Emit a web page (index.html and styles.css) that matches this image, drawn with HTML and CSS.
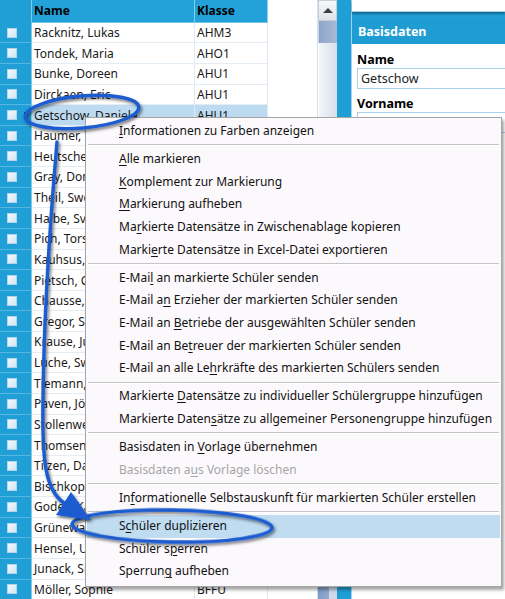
FILE: index.html
```html
<!DOCTYPE html>
<html lang="de">
<head>
<meta charset="utf-8">
<title>Schüler</title>
<link rel="stylesheet" href="styles.css">
</head>
<body>
<div class="app">
  <div class="gridwrap">
    <div class="grid">
      <div class="row head">
        <div class="rh"></div>
        <div class="hc">Name</div>
        <div class="hc">Klasse</div>
      </div>
      <div class="row"><div class="rh"><span class="cb"></span></div><div class="c name">Racknitz, Lukas</div><div class="c">AHM3</div></div>
      <div class="row"><div class="rh"><span class="cb"></span></div><div class="c name">Tondek, Maria</div><div class="c">AHO1</div></div>
      <div class="row"><div class="rh"><span class="cb"></span></div><div class="c name">Bunke, Doreen</div><div class="c">AHU1</div></div>
      <div class="row"><div class="rh"><span class="cb"></span></div><div class="c name">Dirckaen, Eric</div><div class="c">AHU1</div></div>
      <div class="row sel"><div class="rh"><span class="cb"></span><span class="cur"></span></div><div class="c name">Getschow, Daniela</div><div class="c">AHU1</div></div>
      <div class="row"><div class="rh"><span class="cb"></span></div><div class="c name">Haumer, Tina</div><div class="c"></div></div>
      <div class="row"><div class="rh"><span class="cb"></span></div><div class="c name">Heutschel, Anja</div><div class="c"></div></div>
      <div class="row"><div class="rh"><span class="cb"></span></div><div class="c name">Gray, Dominik</div><div class="c"></div></div>
      <div class="row"><div class="rh"><span class="cb"></span></div><div class="c name">Theil, Sweta</div><div class="c"></div></div>
      <div class="row"><div class="rh"><span class="cb"></span></div><div class="c name">Halbe, Sven</div><div class="c"></div></div>
      <div class="row"><div class="rh"><span class="cb"></span></div><div class="c name">Pich, Torsten</div><div class="c"></div></div>
      <div class="row"><div class="rh"><span class="cb"></span></div><div class="c name">Kauhsus, Nico</div><div class="c"></div></div>
      <div class="row"><div class="rh"><span class="cb"></span></div><div class="c name">Pietsch, Christin</div><div class="c"></div></div>
      <div class="row"><div class="rh"><span class="cb"></span></div><div class="c name">Chausse, Lena</div><div class="c"></div></div>
      <div class="row"><div class="rh"><span class="cb"></span></div><div class="c name">Gregor, Sarah</div><div class="c"></div></div>
      <div class="row"><div class="rh"><span class="cb"></span></div><div class="c name">Krause, Julia</div><div class="c"></div></div>
      <div class="row"><div class="rh"><span class="cb"></span></div><div class="c name">Lüche, Swen</div><div class="c"></div></div>
      <div class="row"><div class="rh"><span class="cb"></span></div><div class="c name">Tiemann, Jan</div><div class="c"></div></div>
      <div class="row"><div class="rh"><span class="cb"></span></div><div class="c name">Paven, Jörg</div><div class="c"></div></div>
      <div class="row"><div class="rh"><span class="cb"></span></div><div class="c name">Stollenwerk, Tim</div><div class="c"></div></div>
      <div class="row"><div class="rh"><span class="cb"></span></div><div class="c name">Thomsen, Ole</div><div class="c"></div></div>
      <div class="row"><div class="rh"><span class="cb"></span></div><div class="c name">Tilzen, Daniel</div><div class="c"></div></div>
      <div class="row"><div class="rh"><span class="cb"></span></div><div class="c name">Bischkopf, Eva</div><div class="c"></div></div>
      <div class="row"><div class="rh"><span class="cb"></span></div><div class="c name">Godes, Kai</div><div class="c"></div></div>
      <div class="row"><div class="rh"><span class="cb"></span></div><div class="c name">Grünewald, Lisa</div><div class="c"></div></div>
      <div class="row"><div class="rh"><span class="cb"></span></div><div class="c name">Hensel, Ute</div><div class="c"></div></div>
      <div class="row"><div class="rh"><span class="cb"></span></div><div class="c name">Junack, Silke</div><div class="c"></div></div>
      <div class="row"><div class="rh"><span class="cb"></span></div><div class="c name">Möller, Sophie</div><div class="c">BFFU</div></div>
    </div>
  </div>
  <div class="scrollbar">
    <div class="sb-btn"><span class="up"></span></div>
    <div class="sb-thumb"></div>
    <div class="sb-track"></div>
    <div class="sb-low"></div>
  </div>
  <div class="gutter"></div>
  <div class="panel">
    <div class="topbox"></div>
    <div class="pbox">
      <div class="phead">Basisdaten</div>
      <div class="pbody">
        <div class="lbl">Name</div>
        <div class="inp">Getschow</div>
        <div class="lbl">Vorname</div>
        <div class="inp"></div>
      </div>
    </div>
  </div>
</div>

<div class="menu">
  <div class="mi"><u>I</u>nformationen zu Farben anzeigen</div>
  <div class="sep"></div>
  <div class="mi"><u>A</u>lle markieren</div>
  <div class="mi"><u>K</u>omplement zur Markierung</div>
  <div class="mi"><u>M</u>arkierung aufheben</div>
  <div class="mi">Ma<u>r</u>kierte Datensätze in Zwischenablage kopieren</div>
  <div class="mi">Marki<u>e</u>rte Datensätze in Excel-Datei exportieren</div>
  <div class="sep"></div>
  <div class="mi">E-Mai<u>l</u> an markierte Schüler senden</div>
  <div class="mi">E-Mail a<u>n</u> Erzieher der markierten Schüler senden</div>
  <div class="mi">E-Mail an <u>B</u>etriebe der ausgewählten Schüler senden</div>
  <div class="mi">E-Mail an Be<u>t</u>reuer der markierten Schüler senden</div>
  <div class="mi">E-Mail an alle Le<u>h</u>rkräfte des markierten Schülers senden</div>
  <div class="sep"></div>
  <div class="mi">Markierte <u>D</u>atensätze zu individueller Schülergruppe hinzufügen</div>
  <div class="mi">Markierte Daten<u>s</u>ätze zu allgemeiner Personengruppe hinzufügen</div>
  <div class="sep"></div>
  <div class="mi">Basisdaten in <u>V</u>orlage übernehmen</div>
  <div class="mi dis">Basisdaten a<u>u</u>s Vorlage löschen</div>
  <div class="sep"></div>
  <div class="mi">In<u>f</u>ormationelle Selbstauskunft für markierten Schüler erstellen</div>
  <div class="sep"></div>
  <div class="mi hi">S<u>c</u>hüler duplizieren</div>
  <div class="mi">Schüler s<u>p</u>erren</div>
  <div class="mi">Sperrun<u>g</u> aufheben</div>
</div>

<svg class="annot" width="505" height="599" viewBox="0 0 505 599" xmlns="http://www.w3.org/2000/svg">
  <defs>
    <filter id="sh" x="-20%" y="-20%" width="140%" height="140%">
      <feDropShadow dx="1.5" dy="2" stdDeviation="1.4" flood-color="#000" flood-opacity="0.55"/>
    </filter>
  </defs>
  <g filter="url(#sh)" fill="none" stroke="#1a5bd0" stroke-width="3.4" stroke-linecap="round">
    <ellipse cx="82" cy="112" rx="57" ry="16" transform="rotate(-5 82 112)"/>
    <path d="M57 142 C52 200 44 300 43 400 C42 460 45 490 64 503"/>
    <ellipse cx="172" cy="526" rx="100" ry="16" transform="rotate(1 172 526)"/>
  </g>
  <polygon filter="url(#sh)" points="91,520 71,492 56,515" fill="#1a5bd0"/>
</svg>
</body>
</html>
```

FILE: styles.css
```css
* { box-sizing: border-box; }
html, body { margin: 0; padding: 0; }
body {
  width: 505px;
  height: 599px;
  overflow: hidden;
  position: relative;
  font-family: "Noto Sans", "Open Sans", sans-serif;
  font-size: 12px;
  color: #111;
}
.app {
  display: flex;
  width: 505px;
  height: 599px;
  background: #1f9fd6;
}
.gridwrap {
  width: 318px;
  height: 599px;
  background: #fff;
  overflow: hidden;
  border-right: 1px solid #d6e2ec;
}
.grid { width: 268px; }
.row {
  display: grid;
  grid-template-columns: 32px 163px 73px;
  height: 20.63px;
}
.row.head { height: 22.7px; }
.rh {
  background: #1f9fd6;
  display: flex;
  align-items: center;
  padding-left: 7px;
  padding-right: 3px;
  border-bottom: 1px solid #55b7e2;
  border-right: 1px solid #7fcbec;
}
.head .rh { border-bottom: 1px solid #1f9fd6; }
.hc {
  background: #22a2d8;
  font-weight: bold;
  color: #000;
  display: flex;
  align-items: center;
  padding-left: 2px;
  border-right: 1px solid #8ad0ee;
  border-bottom: 1px solid #6fc3e8;
}
.cb {
  width: 10px;
  height: 10px;
  border: 1px solid #b3d4ea;
  background: linear-gradient(135deg, #f2f8fc 0%, #cfe6f5 100%);
}
.cur {
  margin-left: auto;
  width: 0;
  height: 0;
  border-top: 3.5px solid transparent;
  border-bottom: 3.5px solid transparent;
  border-left: 4px solid #111;
}
.c {
  display: flex;
  align-items: center;
  padding-left: 2px;
  white-space: nowrap;
  overflow: hidden;
  border-bottom: 1px solid #e4edf4;
  border-right: 1px solid #e0eaf2;
  color: #1a1a1a;
}
.sel .c { background: #bcdbf0; }
.scrollbar {
  width: 19px;
  height: 599px;
  display: flex;
  flex-direction: column;
  background: #e9edf2;
}
.sb-btn {
  height: 21px;
  background: linear-gradient(#f6f7f9, #dfe3e8);
  border: 1px solid #c9ced6;
  display: flex;
  align-items: center;
  justify-content: center;
}
.up {
  width: 0;
  height: 0;
  border-left: 5px solid transparent;
  border-right: 5px solid transparent;
  border-bottom: 5px solid #3a3f48;
}
.sb-thumb {
  height: 22px;
  background: linear-gradient(to right, #8ea6cb, #aab9d4);
  border-left: 1px solid #c7d3e4;
}
.sb-track {
  flex: 1;
  background: linear-gradient(to right, #f3f6fa, #d7dfea);
  border-left: 1px solid #fff;
}
.sb-low {
  height: 40px;
  background: linear-gradient(to right, #7f9bc6 0%, #8fa8cf 55%, #cfd9e8 60%);
}
.gutter {
  width: 15px;
  height: 599px;
  background: #1f9fd6;
  border-right: 1px solid #9fd6ef;
}
.panel {
  flex: 1;
  display: flex;
  flex-direction: column;
}
.topbox {
  height: 12px;
  background: #fff;
  border-bottom: 1px solid #a9cfe6;
  box-shadow: 0 2px 2px rgba(0,0,0,0.35);
}
.pbox {
  margin-top: 6px;
  flex: 1;
  background: #fff;
  display: flex;
  flex-direction: column;
}
.phead {
  height: 26px;
  background: #1f9cd2;
  color: #fff;
  font-weight: bold;
  font-size: 12.5px;
  display: flex;
  align-items: center;
  padding-left: 6px;
}
.pbody {
  padding: 8px 0 0 5px;
}
.lbl {
  font-weight: bold;
  font-size: 12.5px;
  color: #000;
  line-height: 16px;
}
.inp {
  height: 21px;
  border: 1px solid #a9d0ea;
  border-right: none;
  padding-left: 3px;
  display: flex;
  align-items: center;
  font-size: 12.5px;
  color: #222;
  margin-bottom: 7px;
}
.menu {
  position: absolute;
  left: 85px;
  top: 117px;
  width: 417px;
  padding: 2px 0 3px;
  background: #fcf9fc;
  border: 1px solid #a5a5a5;
  box-shadow: 2px 3px 3px rgba(0,0,0,0.35);
}
.mi {
  height: 22.6px;
  line-height: 22.6px;
  padding-left: 33px;
  white-space: nowrap;
  color: #111;
}
.mi u { text-underline-offset: 2px; }
.mi.dis { color: #a6a6a6; }
.mi.hi {
  background: #bfdcf1;
  margin: 0 1px;
  padding-left: 32px;
}
.sep {
  height: 5.6px;
  margin: 0 2px;
  display: flex;
  flex-direction: column;
  justify-content: center;
}
.sep::before {
  content: "";
  display: block;
  height: 1px;
  background: #c4c4c4;
  border-bottom: 1px solid #ffffff;
  box-sizing: content-box;
}
.annot {
  position: absolute;
  left: 0;
  top: 0;
  pointer-events: none;
}
```
